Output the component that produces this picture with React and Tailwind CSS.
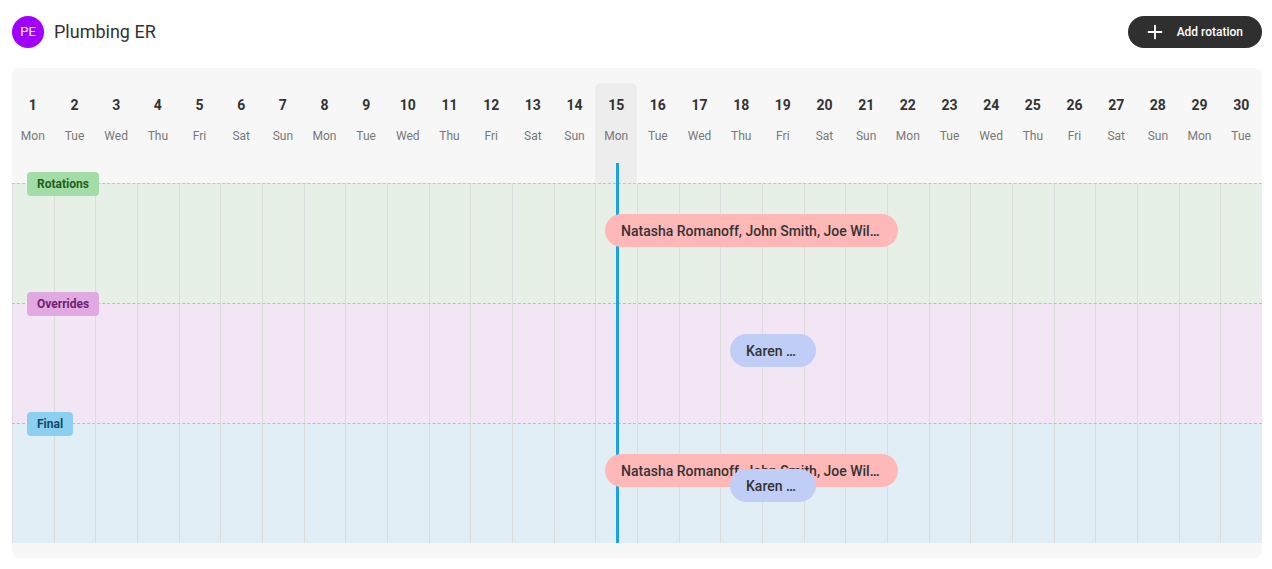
import { Plus } from "lucide-react";

const names = ["Mon", "Tue", "Wed", "Thu", "Fri", "Sat", "Sun"];
const days = Array.from({ length: 30 }, (_, i) => ({ n: i + 1, d: names[i % 7] }));

const rows = [
  {
    label: "Rotations",
    bg: "bg-[#e6f0e6]",
    line: "border-[#a8d8aa]",
    badge: "bg-[#a3dca6] text-[#1e5e22]",
    events: [
      { text: "Natasha Romanoff, John Smith, Joe Wil…", left: 593, top: 30, width: 293, color: "bg-[#ffb8b8]" },
    ],
  },
  {
    label: "Overrides",
    bg: "bg-[#f3e6f4]",
    line: "border-[#dba8dc]",
    badge: "bg-[#e2a8e2] text-[#6b1f6c]",
    events: [{ text: "Karen …", left: 718, top: 30, width: 86, color: "bg-[#bfcdf7]" }],
  },
  {
    label: "Final",
    bg: "bg-[#e1eef6]",
    line: "border-[#8ecde9]",
    badge: "bg-[#8dcff0] text-[#0f4a69]",
    events: [
      { text: "Natasha Romanoff, John Smith, Joe Wil…", left: 593, top: 30, width: 293, color: "bg-[#ffb8b8]" },
      { text: "Karen …", left: 718, top: 45, width: 86, color: "bg-[#bfcdf7]" },
    ],
  },
];

function Row({ row }) {
  return (
    <div className={`relative h-[120px] ${row.bg} border-t border-dashed ${row.line}`}>
      <div className="grid h-full" style={{ gridTemplateColumns: "repeat(30, minmax(0, 1fr))" }}>
        {days.map((d) => (
          <div key={d.n} className="border-l border-[#dcdcdc]" />
        ))}
      </div>
      <span
        className={`absolute left-[15px] top-[-12px] rounded-[4px] px-[10px] h-6 flex items-center text-xs font-bold ${row.badge}`}
      >
        {row.label}
      </span>
      {row.events.map((e, i) => (
        <div
          key={i}
          className={`absolute z-10 h-[33px] rounded-full ${e.color} flex items-center pl-4 text-sm font-medium text-[#333] whitespace-nowrap overflow-hidden`}
          style={{ left: e.left, top: e.top, width: e.width }}
        >
          {e.text}
        </div>
      ))}
    </div>
  );
}

export default function App() {
  return (
    <div className="min-h-[569px] bg-white font-['Roboto',sans-serif] text-[#333]">
      <div className="flex items-center justify-between pl-3 pr-[10px] pt-4 pb-5">
        <div className="flex items-center gap-[10px]">
          <div className="flex h-8 w-8 items-center justify-center rounded-full bg-[#a100ff] text-[13px] text-white">
            PE
          </div>
          <h1 className="text-lg text-[#333]">Plumbing ER</h1>
        </div>
        <button className="flex h-8 items-center gap-[11px] rounded-full bg-[#2f2f2f] pl-[16px] pr-[19px] text-xs font-medium text-white">
          <Plus size={22} strokeWidth={2} />
          Add rotation
        </button>
      </div>

      <div className="relative ml-3 mr-[10px] overflow-hidden rounded-lg bg-[#f7f7f7] pb-[15px]">
        <div className="absolute left-[583.3px] top-[15px] bottom-[15px] w-[41.67px] rounded-t-md bg-black/[0.04]" />
        <div className="relative grid h-[115px] pt-[15px]" style={{ gridTemplateColumns: "repeat(30, minmax(0, 1fr))" }}>
          {days.map((d) => (
            <div key={d.n} className="flex flex-col items-center">
              <span className="mt-[12px] text-sm font-bold text-[#333]">{d.n}</span>
              <span className="mt-[13px] text-xs text-[#777]">{d.d}</span>
            </div>
          ))}
        </div>
        {rows.map((r) => (
          <Row key={r.label} row={r} />
        ))}
        <div className="absolute left-[604px] top-[95px] h-[380px] w-[3px] bg-[#1ba1e6] z-[5]" />
      </div>
    </div>
  );
}
